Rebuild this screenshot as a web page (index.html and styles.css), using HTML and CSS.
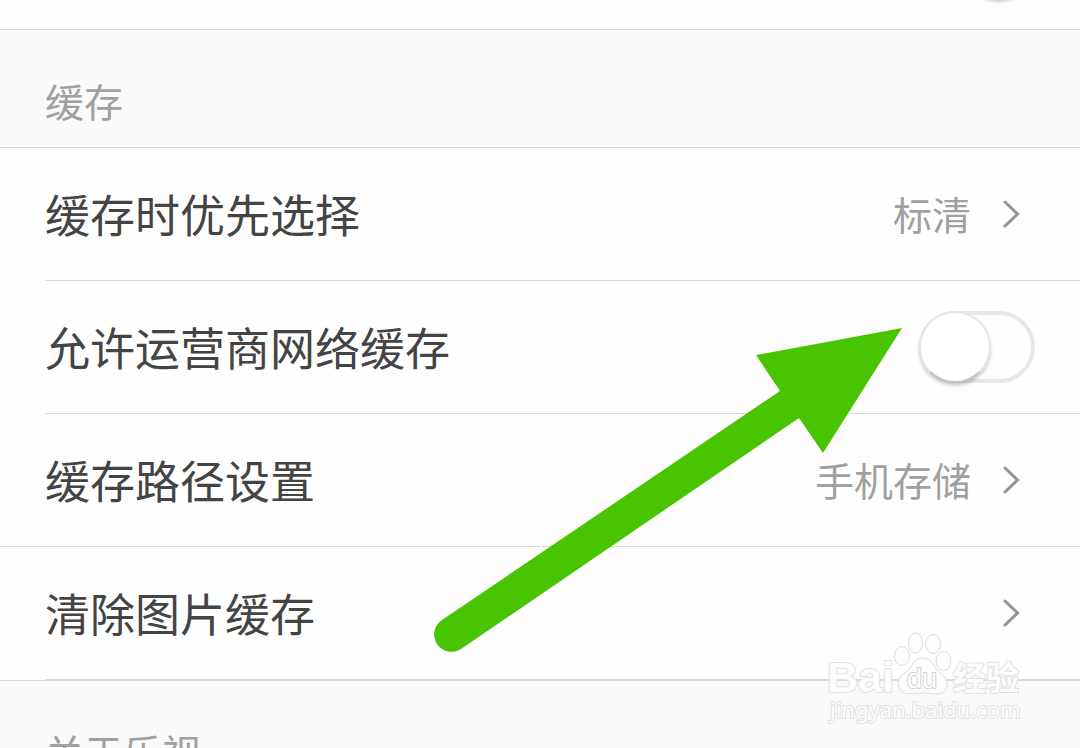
FILE: index.html
```
<!DOCTYPE html>
<html lang="zh-CN">
<head>
<meta charset="utf-8">
<title>缓存</title>
<link rel="stylesheet" href="styles.css">
</head>
<body>
<main class="settings">
  <div class="row-end"><input class="switch" type="checkbox" checked></div>

  <h2 class="section">缓存</h2>
  <button class="row" type="button">
    <span class="label">缓存时优先选择</span>
    <span class="value">标清</span>
    <svg class="chevron" viewBox="0 0 32 32"><path d="M2 4 L14.500 16 L2 28"/></svg>
  </button>
  <div class="row inset">
    <label class="label" for="carrier">允许运营商网络缓存</label>
    <input class="switch" id="carrier" type="checkbox">
  </div>
  <button class="row inset" type="button">
    <span class="label">缓存路径设置</span>
    <span class="value">手机存储</span>
    <svg class="chevron" viewBox="0 0 32 32"><path d="M2 4 L14.500 16 L2 28"/></svg>
  </button>
  <button class="row full last" type="button">
    <span class="label">清除图片缓存</span>
    <svg class="chevron" viewBox="0 0 32 32"><path d="M2 4 L14.500 16 L2 28"/></svg>
  </button>
  <h2 class="section">关于乐视</h2>

  <svg class="arrow" viewBox="0 0 470 326">
    <path d="M346 64 L322 28 L468 1 L389 126 L365 91 L27 322 A17 17 0 1 1 8 293 Z"/>
  </svg>

  <svg class="watermark" viewBox="0 0 200 100">
    <text class="mark brand" x="2" y="67">Bai</text>
    <g class="paw">
      <ellipse cx="77" cy="31" rx="7.500" ry="9.500"/>
      <ellipse cx="90.500" cy="18" rx="7" ry="10"/>
      <ellipse cx="108" cy="19" rx="7.500" ry="9.500"/>
      <ellipse cx="118.500" cy="36" rx="7.500" ry="9.500"/>
      <path d="M97.500 33 C88 33 88 42 81 47 C74 51 71 57 75 64 C79 71 89 68 97.500 68 C106 68 117 72 121 64 C124 57 120 51 114 47 C108 41 107 33 97.500 33 Z"/>
    </g>
    <text class="mark du" x="82" y="63">du</text>
    <text class="mark cjk" x="128" y="65">经验</text>
    <text class="mark url" x="5" y="93">jingyan.baidu.com</text>
  </svg>
</main>
</body>
</html>
```
FILE: styles.css
```
*, *::before { box-sizing: border-box; }

body {
  margin: 0;
  height: 100vh;
  overflow: hidden;
  background: #fefefe;
  color: #444;
  font-family: "Noto Sans CJK SC", sans-serif;
}

.settings { position: relative; }

.row-end {
  display: flex;
  align-items: flex-end;
  justify-content: flex-end;
  height: 29px;
  padding: 0 45px 29px;
  overflow: hidden;
}

.row-end .switch { margin-bottom: 1px; }

.section {
  margin: 0;
  padding: 42px 45px 18px;
  border: solid #dcdcdc;
  border-width: 1px 0;
  background: #fafafa;
  color: #a0a0a0;
  font-size: 39px;
  font-weight: 400;
  line-height: 57px;
}

.row {
  display: flex;
  align-items: center;
  gap: 32px;
  width: 100%;
  min-height: 132px;
  margin: 0;
  padding: 0 45px;
  border: 0;
  background: linear-gradient(#dcdcdc, #dcdcdc) 45px 0 / 100% 0 no-repeat;
  color: inherit;
  font: inherit;
  text-align: left;
}

.row.inset, .row.full {
  min-height: 133px;
  padding-top: 1px;
  background-size: 100% 1px;
}

.row.full { background-position: 0 0; }

.row.last {
  min-height: 134px;
  padding-bottom: 1px;
  background-image: linear-gradient(#dcdcdc, #dcdcdc), linear-gradient(#dcdcdc, #dcdcdc);
  background-position: 0 0, 45px 100%;
}

.label {
  flex: 1;
  font-size: 45px;
  line-height: 66px;
}

.value {
  padding-bottom: 2px;
  color: #a0a0a0;
  font-size: 39px;
  line-height: 57px;
}

.chevron {
  width: 32px;
  height: 32px;
  fill: none;
  stroke: #929292;
  stroke-width: 3;
  stroke-linecap: round;
}

.switch {
  flex: none;
  appearance: none;
  display: flex;
  width: 116px;
  height: 72px;
  margin: 0;
  border: 4px solid #e8e8e8;
  border-radius: 36px;
  background: #fefefe;
}

.switch::before {
  content: "";
  flex: none;
  width: 72px;
  height: 72px;
  margin: -4px;
  border: 2px solid #e6e6e6;
  border-bottom-color: #c4c4c4;
  border-radius: 50%;
  background: #fff;
  box-shadow: 0 3px 4px -1px #00000048;
}

.switch:checked { justify-content: flex-end; }

.arrow {
  position: absolute;
  top: 327px;
  right: 176px;
  width: 470px;
  height: 326px;
  overflow: visible;
  fill: #49c400;
  pointer-events: none;
}

.watermark {
  position: absolute;
  top: 625px;
  right: 55px;
  width: 200px;
  height: 100px;
  pointer-events: none;
}

.paw, .mark {
  fill: #fdfdfd;
  stroke: #dcdcdc;
  stroke-width: 1;
}

.mark {
  stroke: #e2e2e2;
  stroke-width: 2;
  stroke-linejoin: round;
  paint-order: stroke;
}

.brand { font: 700 43px "Liberation Sans", sans-serif; }
.du { font: 400 27px "Liberation Sans", sans-serif; stroke: #d4d4d4; }
.cjk { font: 700 33px "Noto Sans CJK SC", sans-serif; }
.url { font: 400 22px "Noto Sans", sans-serif; }
```
